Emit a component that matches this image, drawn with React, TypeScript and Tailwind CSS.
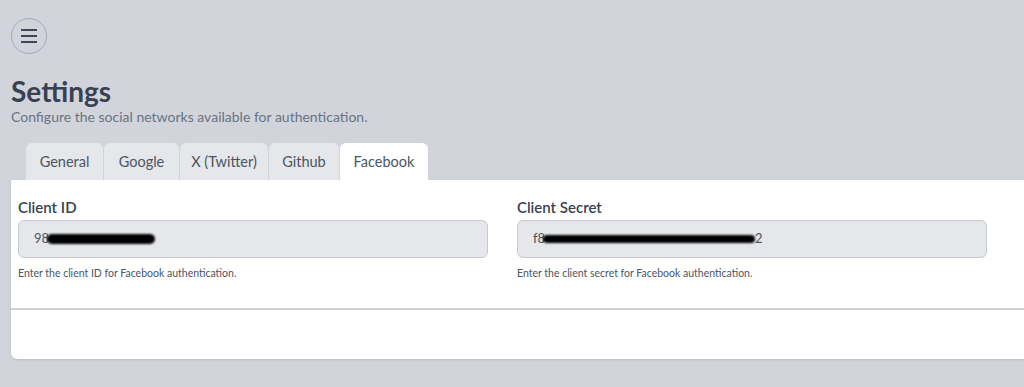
import React from 'react';

const tabs = [
  { name: 'General', w: 'w-[77px]' },
  { name: 'Google', w: 'w-[75px]' },
  { name: 'X (Twitter)', w: 'w-[88px]' },
  { name: 'Github', w: 'w-[70px]' },
  { name: 'Facebook', w: 'w-[88px]' },
];

const App: React.FC = () => {
  const active = 'Facebook';
  return (
    <div className="min-h-[387px] bg-[#d1d5db] pl-[11px] pt-[18px] overflow-hidden" style={{ fontFamily: 'Lato, "Noto Sans", sans-serif' }}>
      <button className="w-9 h-9 rounded-full border border-[#a3a8b3] flex items-center justify-center">
        <svg width="18" height="14" viewBox="0 0 18 14" fill="none" stroke="#3f4658" strokeWidth="2">
          <path d="M1 1h16M1 7h16M1 13h16" />
        </svg>
      </button>

      <h1 className="mt-[20px] text-[28px] leading-[34px] font-bold text-[#374151]">Settings</h1>
      <p className="text-[14px] leading-[18px] text-[#6b7280]">Configure the social networks available for authentication.</p>

      <div className="flex gap-px pl-[15px] mt-[17px]">
        {tabs.map((t) => (
          <div
            key={t.name}
            className={
              t.name === active
                ? `${t.w} h-[37px] flex items-center justify-center rounded-t-md bg-white text-[14.5px] text-[#4b5563]`
                : `${t.w} h-[37px] flex items-center justify-center rounded-t-md bg-[#e5e7eb] text-[14.5px] text-[#4b5563]`
            }
          >
            {t.name}
          </div>
        ))}
      </div>

      <div className="w-[1030px] bg-white rounded-bl-md shadow-sm">
        <div className="grid grid-cols-[470px_470px] gap-x-[29px] pl-[7px] pt-[17px] pb-[28px]">
          <div>
            <label className="block text-[15px] leading-[20px] font-semibold text-[#374151]">Client ID</label>
            <div className="mt-[3px] h-[38px] rounded-md border border-[#c7cbd1] bg-[#e5e7eb] flex items-center pl-[15px] text-[13px] text-[#4b5563]">
              <span>98</span>
              <span className="inline-block w-[108px] h-[10px] -ml-[2px] rounded-full bg-black blur-[1px]" />
            </div>
            <p className="mt-[8px] text-[10.5px] leading-[14px] text-[#4b5563]">Enter the client ID for Facebook authentication.</p>
          </div>
          <div>
            <label className="block text-[15px] leading-[20px] font-semibold text-[#374151]">Client Secret</label>
            <div className="mt-[3px] h-[38px] rounded-md border border-[#c7cbd1] bg-[#e5e7eb] flex items-center pl-[15px] text-[13px] text-[#4b5563]">
              <span>f8</span>
              <span className="inline-block w-[212px] h-[8px] -ml-[2px] rounded-full bg-black blur-[1px]" />
              <span>2</span>
            </div>
            <p className="mt-[8px] text-[10.5px] leading-[14px] text-[#4b5563]">Enter the client secret for Facebook authentication.</p>
          </div>
        </div>
        <div className="h-[51px] border-t-2 border-[#cfd3d9]" />
      </div>
    </div>
  );
};

export default App;
